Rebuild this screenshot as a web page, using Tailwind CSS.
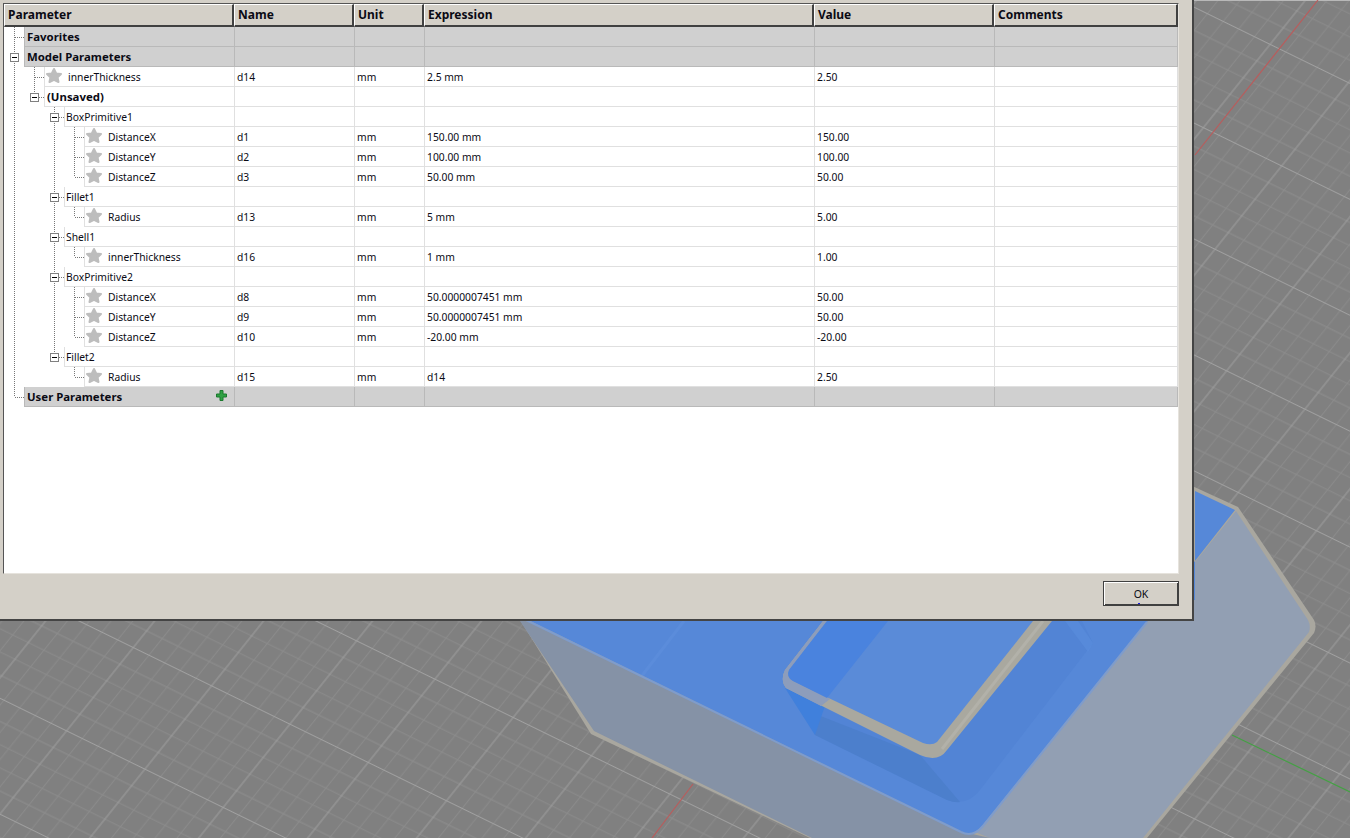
<!DOCTYPE html>
<html lang="en">
  <head>
    <meta charset="UTF-8" />
    <title>Parameters</title>
    <script src="https://cdn.jsdelivr.net/npm/@tailwindcss/browser@4"></script>
  </head>
  <body class="relative w-[1350px] h-[838px] overflow-hidden bg-[#808080] font-['Noto_Sans',sans-serif] text-[10.3px] leading-[20px] text-[#0a0a14]">
    <!-- 3d viewport behind the dialog -->
    <svg class="absolute inset-0" width="1350" height="838" viewBox="0 0 1350 838">
      <defs>
        <pattern id="grid" width="100" height="100" patternUnits="userSpaceOnUse" patternTransform="matrix(.783 .383 -.667 .833 127.5 586.75)">
          <path d="M10 0V100M30 0V100M70 0V100M90 0V100M0 10H100M0 30H100M0 70H100M0 90H100" stroke="#8c8c8c" stroke-width="1" fill="none"/>
          <path d="M50 0V100M0 50H100" stroke="#a0a0a0" stroke-width="1.1" fill="none"/>
        </pattern>
      </defs>
      <rect width="1350" height="838" fill="url(#grid)"/>
      <rect width="1350" height="1" fill="#b8b8b8"/>
      <path d="M1318 0L1195 155M693 784L652 838" stroke="#b85c5c" stroke-width="1.2"/>
      <path d="M1232 735L1350 792" stroke="#44a044" stroke-width="1.2"/>

      <!-- outer box -->
      <path d="M1190 485L1238 507L1314 620Q1317 626 1314 633L1147 838H810L591 734L517 615Z" fill="#a9a79f"/>
      <path d="M1236 511L1308 620Q1311 626 1309 632L1143 838H990L975 832L1147 622Z" fill="#929fb3"/>
      <path d="M520 621L594 731L812 838H990L968 833L522 617Z" fill="#8592a6"/>
      <path d="M1195 491L1235 510L1147 622L982 826Q972 838 960 831L522 617V600H1195Z" fill="#5688d8"/>
      <path d="M684 621L641 677" stroke="#6394e0" stroke-width="3" opacity=".4"/>
      <path d="M522 618L961 832" stroke="#7f9ccb" stroke-width="2"/>
      <path d="M1147 622L983 826Q973 838 961 832" stroke="#7f9ccb" stroke-width="2" fill="none"/>

      <!-- pocket seen through the floor -->
      <path d="M1082 621L1093 643L980 790Q967 807 947 800L815 735L788 692L823 621Z" fill="#5284d5"/>
      <path d="M813 713L815 735L947 800Q955 803 960 802L920 755Z" fill="#4c7fcc"/>
      <path d="M785 688L815 735L827 700Z" fill="#4080dc"/>
      <path d="M1078 621L1093 643L1088 652L1065 621Z" fill="#5b90e0" opacity=".5"/>

      <!-- pocket rim -->
      <path d="M823 621L785 670Q780 680 786 688L920 755Q938 763 947 750L1052 621Z" fill="#a9a89f"/>
      <path d="M823 621L785 670Q780 680 786 688L821 706L830 699L793 681Q786 676 789 670L827 621Z" fill="#8d9dbb"/>
      <path d="M827 621L789 670Q786 677 793 681L923 743Q932 746 937 742L1033 621Z" fill="#5a8bd8"/>
      <path d="M827 621L789 670Q786 677 793 681L827 698L888 621Z" fill="#4a83de"/>
      <path d="M1043 621L942 749" stroke="#b2b1a9" stroke-width="3"/>
    </svg>

    <!-- parameters dialog -->
    <div class="absolute top-0 left-0 w-[1194px] h-[621px] flex flex-col bg-[#d4d0c8] border-r-2 border-b-2 border-r-[#444] border-b-[#444] pl-[3px] pt-[3px]">
      <div class="relative w-[1176px] h-[571px] bg-white border-t border-l border-t-[#555] border-l-[#555] border-r border-b border-r-[#e6e3dd] border-b-[#e6e3dd]">
        <!-- header -->
        <div class="grid grid-cols-[230px_120px_70px_390px_180px_184px] h-[21px] font-bold text-[12px] leading-[20px]">
          <div class="bg-[#d4d0c8] border-t border-l border-white border-r-2 border-b-2 border-r-[#404040] border-b-[#404040] pl-[3px]">Parameter</div>
          <div class="bg-[#d4d0c8] border-t border-l border-white border-r-2 border-b-2 border-r-[#404040] border-b-[#404040] pl-[3px]">Name</div>
          <div class="bg-[#d4d0c8] border-t border-l border-white border-r-2 border-b-2 border-r-[#404040] border-b-[#404040] pl-[3px]">Unit</div>
          <div class="bg-[#d4d0c8] border-t border-l border-white border-r-2 border-b-2 border-r-[#404040] border-b-[#404040] pl-[3px]">Expression</div>
          <div class="bg-[#d4d0c8] border-t border-l border-white border-r-2 border-b-2 border-r-[#404040] border-b-[#404040] pl-[3px]">Value</div>
          <div class="bg-[#d4d0c8] border-t border-l border-white border-r-2 border-b-2 border-r-[#404040] border-b-[#404040] pl-[3px]">Comments</div>
        </div>

        <!-- rows -->
        <div class="mt-px ml-[20px] h-px bg-[#d0d0d0]"></div>
        <div id="rows"></div>

        <!-- tree lines and expanders -->
        <svg class="absolute left-[-4px] top-[-4px]" width="120" height="400" viewBox="0 0 120 400">
          <g stroke="#777" stroke-dasharray="1 1" fill="none" shape-rendering="crispEdges">
            <path d="M14.5 27V397M14.5 37H24M14.5 397H24"/>
            <path d="M34.5 67V97M34.5 77H44M34.5 97H44"/>
            <path d="M54.5 107V357M54.5 117H64M54.5 197H64M54.5 237H64M54.5 277H64M54.5 357H64"/>
            <path d="M74.5 127V177M74.5 137H84M74.5 157H84M74.5 177H84"/>
            <path d="M74.5 207V217M74.5 217H84"/>
            <path d="M74.5 247V257M74.5 257H84"/>
            <path d="M74.5 287V337M74.5 297H84M74.5 317H84M74.5 337H84"/>
            <path d="M74.5 367V377M74.5 377H84"/>
          </g>
          <use href="#box" x="10" y="53"/>
          <use href="#box" x="30" y="93"/>
          <use href="#box" x="50" y="113"/>
          <use href="#box" x="50" y="193"/>
          <use href="#box" x="50" y="233"/>
          <use href="#box" x="50" y="273"/>
          <use href="#box" x="50" y="353"/>
          <defs>
            <g id="box">
              <rect x=".5" y=".5" width="8" height="8" fill="#fff" stroke="#808080"/>
              <path d="M2 4.5H7" stroke="#000"/>
            </g>
          </defs>
        </svg>
      </div>

      <div class="flex justify-end pr-[13px] pt-[7px]">
        <button class="relative w-[76px] h-[25px] bg-[#d4d0c8] border border-[#404040] text-[10.5px] leading-[20px] shadow-[inset_1px_1px_0_#fff,inset_-1px_-1px_0_#404040]">
          OK
          <span class="absolute left-[34px] top-[21px] w-[2px] h-px bg-[#1a1ae0]"></span>
        </button>
      </div>
    </div>

    <script>
      const star = `<svg class="shrink-0" width="18" height="18" viewBox="0 0 18 18"><path d="M9 2L11.2 6.4L16 7L12.6 10.4L13.5 15L9 12.8L4.5 15L5.4 10.4L2 7L6.8 6.4Z" fill="#bdbdbd" stroke="#bdbdbd" stroke-width="2" stroke-linejoin="round"/></svg>`;
      const plus = `<svg class="absolute right-[7px] top-[3px]" width="11" height="11" viewBox="0 0 11 11"><path d="M4 .5H7V4H10.5V7H7V10.5H4V7H.5V4H4Z" fill="#2fa043" stroke="#1b7a2e"/></svg>`;
      const rows = [
        ["group", 0, "Favorites"],
        ["group", 0, "Model Parameters"],
        ["param", 1, "innerThickness", "d14", "mm", "2.5 mm", "2.50"],
        ["bold", 1, "(Unsaved)"],
        ["node", 2, "BoxPrimitive1"],
        ["param", 3, "DistanceX", "d1", "mm", "150.00 mm", "150.00"],
        ["param", 3, "DistanceY", "d2", "mm", "100.00 mm", "100.00"],
        ["param", 3, "DistanceZ", "d3", "mm", "50.00 mm", "50.00"],
        ["node", 2, "Fillet1"],
        ["param", 3, "Radius", "d13", "mm", "5 mm", "5.00"],
        ["node", 2, "Shell1"],
        ["param", 3, "innerThickness", "d16", "mm", "1 mm", "1.00"],
        ["node", 2, "BoxPrimitive2"],
        ["param", 3, "DistanceX", "d8", "mm", "50.0000007451 mm", "50.00"],
        ["param", 3, "DistanceY", "d9", "mm", "50.0000007451 mm", "50.00"],
        ["param", 3, "DistanceZ", "d10", "mm", "-20.00 mm", "-20.00"],
        ["node", 2, "Fillet2"],
        ["param", 3, "Radius", "d15", "mm", "d14", "2.50"],
        ["group", 0, "User Parameters"],
      ];
      const indents = ["ml-[20px]", "ml-[40px]", "ml-[60px]", "ml-[80px]"];
      document.getElementById("rows").innerHTML = rows.map(([kind, level, label, name = "", unit = "", expr = "", value = ""]) => {
        const isGroup = kind === "group";
        const line = isGroup ? "border-[#b9b9b9] bg-[#d0d0d0]" : "border-[#e0e0e0] bg-white";
        const cell = `h-[20px] border-b border-r pl-[2px] overflow-hidden ${line}`;
        let first = `<span class="pl-[1px]">${label}</span>`;
        if (kind === "param") first = `<div class="flex items-start gap-[5px]">${star}<span>${label}</span></div>`;
        if (isGroup || kind === "bold") first = `<span class="pl-[2px] font-bold text-[11.4px]">${label}</span>`;
        return `<div class="grid grid-cols-[231px_120px_70px_390px_180px_183px]">
          <div class="h-[20px]"><div class="relative h-[20px] border-b border-r border-l ${line} ${indents[level]}">${first}${label === "User Parameters" ? plus : ""}</div></div>
          <div class="${cell}">${name}</div>
          <div class="${cell}">${unit}</div>
          <div class="${cell}">${expr}</div>
          <div class="${cell}">${value}</div>
          <div class="${cell}"></div>
        </div>`;
      }).join("");
    </script>
  </body>
</html>
